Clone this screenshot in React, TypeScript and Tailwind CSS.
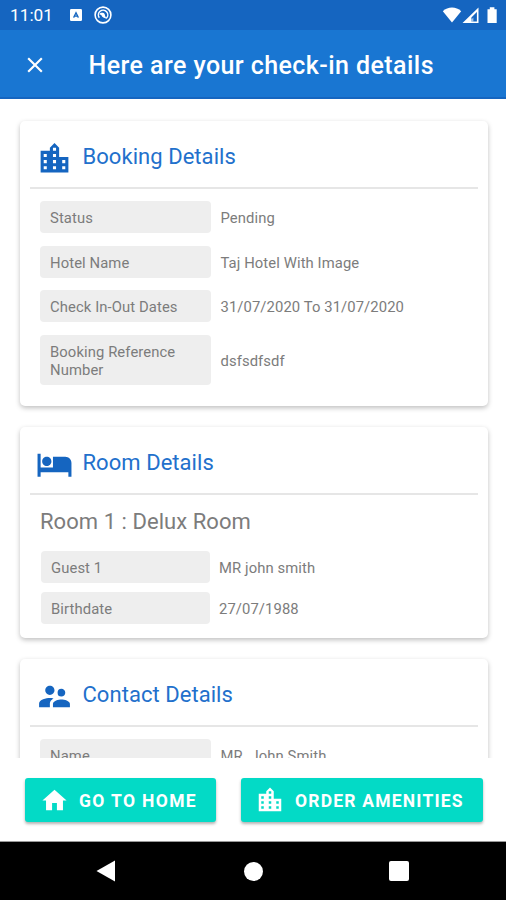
import React from 'react';
import { MdClose, MdHome, MdHotel, MdLocationCity, MdSupervisorAccount } from 'react-icons/md';
import clsx from 'clsx';

type RowProps = { label: string; value: string; inset?: boolean; tall?: boolean };

function Row({ label, value, inset, tall }: RowProps) {
    return (
        <div className="flex items-center">
            <div className={clsx(
                "flex items-center rounded bg-[#eeeeee] pl-2.5 pt-0.5",
                inset ? "ml-px w-[169px]" : "w-[171px]",
                tall ? "h-[50px]" : "h-8"
            )}>
                <span className="w-[140px] leading-[18px]">{label}</span>
            </div>
            <div className={clsx("pt-[3px]", inset ? "ml-[9px]" : "ml-[9.5px]")}>{value}</div>
        </div>
    )
}

function CardTitle({ icon, title }: { icon: React.ReactNode; title: string }) {
    return (
        <div className="mx-2.5 flex h-[67.5px] shrink-0 items-center border-b-2 border-[#e6e6e6] pl-1.5 text-[#1565c0]">
            <div className="mt-[10px]">{icon}</div>
            <h2 className="ml-[9.5px] mt-[5px] text-[22px] tracking-[0.05px] text-[#2270cc]">{title}</h2>
        </div>
    )
}

const card = "shrink-0 rounded-[5px] bg-white shadow-[0_2px_5px_rgba(0,0,0,0.25)]"

function StatusBar() {
    return (
        <div className="flex h-[30px] items-center bg-[#1565c0] pl-[10px] pr-[8px] text-white">
            <span className="mt-[2px] w-[60px] text-[17.3px]">11:01</span>
            <svg className="h-3 w-3" viewBox="0 0 12 12">
                <rect width="12" height="12" rx="1.2" fill="#fff" />
                <path d="M3.6 8.6 6 3.8l2.4 4.8M4.5 7.2h3" fill="none" stroke="#1565c0" strokeWidth="1.3" />
            </svg>
            <svg className="ml-3 h-[18px] w-[18px]" viewBox="0 0 18 18" fill="none" stroke="#fff">
                <circle cx="9" cy="9" r="7.9" strokeWidth="1.6" />
                <path d="M5.3 11.7A4.7 4.7 0 1 1 12.3 12.3" strokeWidth="1.5" />
                <path d="M5.2 8.2C6.5 6.6 9.6 6.2 10.8 8.4c.3 1.6.8 2.8 2.4 4.8-2-1.2-3.4-1.4-4.9-2.4L7.2 9.1z" fill="#fff" stroke="none" />
            </svg>
            <div className="flex-1" />
            <svg className="h-[18px] w-[56px]" viewBox="0 0 56 18" fill="#fff">
                <path d="M.8 5.2C5.8 .4 14.2 .4 19.2 5.2L10 16.5z" />
                <path fillRule="evenodd" d="M36.5 1.5V17H20.5zM34.9 6 29.4 11.4v4h5.5z" />
                <path d="M29.4 15.4v-2l2-2v4z" opacity=".6" />
                <path d="M45.5 3.2h2.3V1.2h4.6v2h2.3V17h-9.2z" />
            </svg>
        </div>
    )
}

function App() {
    return (
        <div className="flex h-[900px] w-[506px] flex-col overflow-hidden bg-white font-['Roboto',sans-serif]">
            <StatusBar />
            <header className="flex h-[69px] shrink-0 items-center border-b-2 border-[#1565c0] bg-[#1976d2] pl-[22px] text-white">
                <MdClose className="mt-0.5 h-[26px] w-[26px]" />
                <h1 className="ml-[40.5px] mt-[5px] whitespace-nowrap text-[25px] font-medium tracking-[0.43px]">Here are your check-in details</h1>
            </header>

            <main className="flex h-[659px] shrink-0 flex-col gap-[21px] overflow-hidden pl-[20px] pr-[18.5px] pt-[22px] text-[14.8px] tracking-[0.1px] text-[#7c7c7c]">
                <section className={clsx(card, "h-[285px]")}>
                    <CardTitle icon={<MdLocationCity className="h-[37px] w-[37px]" />} title="Booking Details" />
                    <div className="flex flex-col gap-[12.5px] pl-5 pt-[12.5px]">
                        <Row label="Status" value="Pending" />
                        <Row label="Hotel Name" value="Taj Hotel With Image" />
                        <Row label="Check In-Out Dates" value="31/07/2020 To 31/07/2020" />
                        <Row label="Booking Reference Number" value="dsfsdfsdf" tall />
                    </div>
                </section>

                <section className={clsx(card, "h-[211px]")}>
                    <CardTitle icon={<MdHotel className="h-[37px] w-[37px]" />} title="Room Details" />
                    <h3 className="pl-5 pt-[11px] text-[22px] leading-8 tracking-[0.05px]">Room 1 : Delux Room</h3>
                    <div className="flex flex-col gap-[9px] pl-5 pt-[13.5px]">
                        <Row label="Guest 1" value="MR john smith" inset />
                        <Row label="Birthdate" value="27/07/1988" inset />
                    </div>
                </section>

                <section className={clsx(card, "h-[285px]")}>
                    <CardTitle icon={<MdSupervisorAccount className="h-[37px] w-[37px]" />} title="Contact Details" />
                    <div className="flex flex-col pl-5 pt-[12px]">
                        <Row label="Name" value="MR. John Smith" />
                    </div>
                </section>
            </main>

            <footer className="flex h-[84px] shrink-0 gap-[25px] border-b border-[#999] pl-[25px] pt-[20px] text-[17.5px] font-bold text-white">
                <button className="flex h-[44px] w-[191px] items-center rounded-[3px] bg-[#03dac6] pl-[15px] shadow-[0_2px_3px_rgba(0,0,0,0.3)]">
                    <MdHome className="h-[29px] w-[29px]" />
                    <span className="ml-[10px] mt-[2px] whitespace-nowrap tracking-[1.35px]">GO TO HOME</span>
                </button>
                <button className="flex h-[44px] w-[242px] items-center rounded-[3px] bg-[#03dac6] pl-[14px] shadow-[0_2px_3px_rgba(0,0,0,0.3)]">
                    <MdLocationCity className="h-[30px] w-[30px]" />
                    <span className="ml-[10px] mt-[2px] whitespace-nowrap tracking-[1.2px]">ORDER AMENITIES</span>
                </button>
            </footer>

            <nav className="flex flex-1 items-center bg-black pl-[96px]">
                <svg className="h-[22px] w-5" viewBox="0 0 20 22" fill="#fff"><path d="M.5 11 19 .5v21z" /></svg>
                <div className="ml-[128px] h-[19px] w-[19px] rounded-full bg-white" />
                <div className="ml-[126px] h-[20px] w-[20px] rounded-[2px] bg-white" />
            </nav>
        </div>
    );
}

export default App;
